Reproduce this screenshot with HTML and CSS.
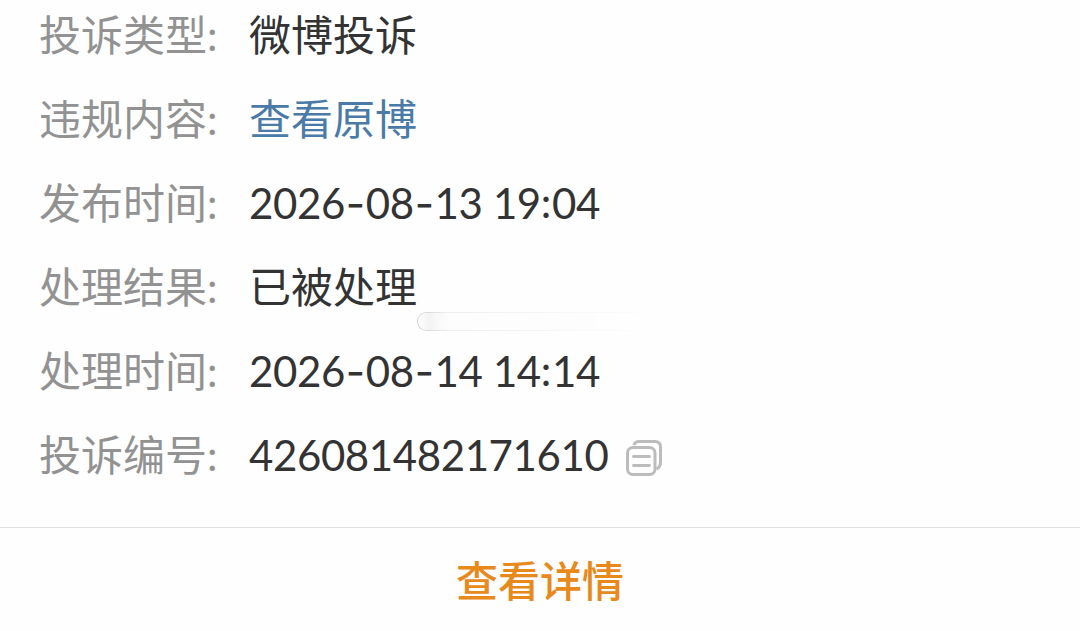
FILE: index.html
```html
<!DOCTYPE html>
<html lang="zh-CN">
<head>
    <meta charset="UTF-8">
    <meta name="viewport" content="width=device-width, initial-scale=1.0">
    <title>投诉详情</title>
    <link rel="stylesheet" href="styles.css">
</head>
<body>
    <main>
        <div class="list">
            <div class="row">
                <span class="label">投诉类型:</span>
                <span class="value">微博投诉</span>
            </div>
            <div class="row">
                <span class="label">违规内容:</span>
                <a class="value link">查看原博</a>
            </div>
            <div class="row">
                <span class="label">发布时间:</span>
                <span class="value num">2026<i>-</i>08<i>-</i>13 19<b>:</b>04</span>
            </div>
            <div class="row">
                <span class="label">处理结果:</span>
                <span class="value">已被处理</span>
                <div class="mark"></div>
            </div>
            <div class="row">
                <span class="label">处理时间:</span>
                <span class="value num">2026<i>-</i>08<i>-</i>14 14<b>:</b>14</span>
            </div>
            <div class="row">
                <span class="label">投诉编号:</span>
                <span class="value num">426081482171610</span>
                <svg class="copy" width="38" height="38" viewBox="0 0 38 38" fill="none" stroke="#bcbcbc" stroke-width="3">
                    <path d="M9 6Q10 2.500 14 2.500H30Q35.500 2.500 35.500 8V23Q35.500 28 31.500 30"/>
                    <rect x="2.500" y="8.500" width="27.500" height="27" rx="5.500"/>
                    <path d="M8.500 17.500H24.500M8.500 26.500H24.500" stroke-width="2.800" stroke-linecap="round"/>
                </svg>
            </div>
        </div>
        <div class="footer">
            <a class="detail">查看详情</a>
        </div>
    </main>
</body>
</html>
```

FILE: styles.css
```css
* {
    padding: 0;
    margin: 0;
    box-sizing: border-box;
}

body {
    background-color: #fefefe;
    font-family: Lato, "Noto Sans CJK SC", sans-serif;
    font-size: 42px;
    overflow: hidden;
}

main {
    height: 631px;
    display: flex;
    flex-direction: column;
}

.list {
    height: 535px;
    margin-top: -7px;
    padding: 0 39px;
    border-bottom: 1px solid #e0e0e0;
}

.row {
    position: relative;
    display: flex;
    align-items: center;
    height: 84px;
    line-height: 84px;
    white-space: nowrap;
}

.label {
    width: 210px;
    color: #929292;
}

.value {
    color: #333;
}

.link {
    color: #4a7aa8;
}

.num {
    letter-spacing: -0.4px;
}

.num i {
    font-family: Inter, sans-serif;
    font-style: normal;
    margin: 0 1px;
}

.num b {
    font-weight: normal;
    position: relative;
    top: -1px;
    margin-right: 1px;
}

.copy {
    margin-left: 17px;
    margin-top: 5px;
}

/* faded tag outline */
.mark {
    position: absolute;
    left: 378px;
    top: 67px;
    width: 250px;
    height: 19px;
    border: 1px solid #ccc;
    border-right: none;
    border-radius: 9px 0 0 9px;
    background: linear-gradient(90deg, #fff, #eee 12px, #fafafa 30px, #fafafa);
    -webkit-mask-image: linear-gradient(90deg, #000, rgba(0, 0, 0, 0.3) 12%, transparent);
    mask-image: linear-gradient(90deg, #000, rgba(0, 0, 0, 0.3) 12%, transparent);
}

.footer {
    flex: 1;
    display: flex;
    align-items: center;
    justify-content: center;
    padding-bottom: 2px;
}

.detail {
    color: #e8891c;
    font-weight: 500;
}
```
